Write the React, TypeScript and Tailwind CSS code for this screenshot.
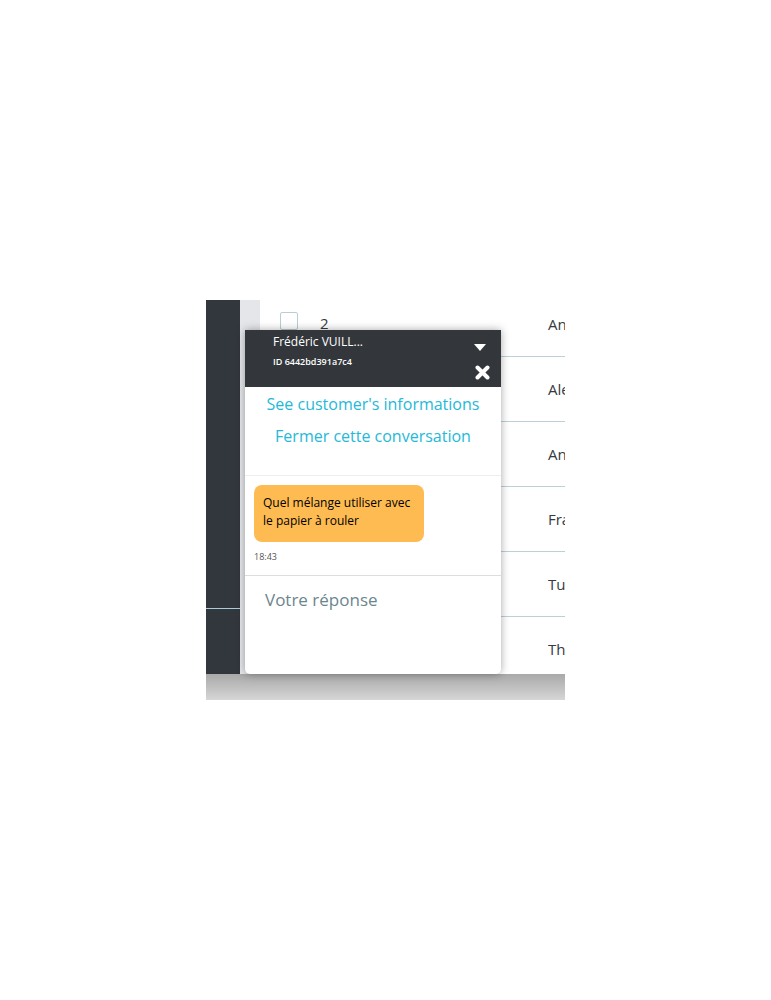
import React from "react";

const rows = [
  { t: "An" },
  { t: "Ale" },
  { t: "An" },
  { t: "Fra" },
  { t: "Tu" },
  { t: "Th" },
];

export default function App() {
  return (
    <div className="w-[771px] h-[1000px] bg-white" style={{ fontFamily: '"Open Sans", "Noto Sans", sans-serif' }}>
      <div className="pt-[300px] pl-[206px]">
        <div className="relative w-[359px] h-[400px] overflow-hidden">
          <div className="flex h-[374px] overflow-hidden">
            <div className="w-[34px] bg-[#32363d] flex flex-col">
              <div className="h-[308px]" />
              <div className="h-px bg-[#a9cdd6]" />
            </div>
            <div className="w-[20px] bg-[#e4e6e9]" />
            <div className="flex-1 bg-white -mt-[8px]">
              {rows.map((r, i) => (
                <div key={i} className="h-[65px] border-b border-[#bcd0d6] flex items-center relative">
                  {i === 0 && (
                    <>
                      <div className="absolute left-[20px] top-[20px] w-[18px] h-[18px] border border-[#bbcdd2] rounded-[2px] bg-white" />
                      <div className="absolute left-[60px] top-[20px] text-[15px] text-[#363a41]">2</div>
                    </>
                  )}
                  <div className="absolute left-[288px] text-[15px] text-[#363a41] whitespace-nowrap">{r.t}</div>
                </div>
              ))}
            </div>
          </div>
          <div className="h-[26px] bg-gradient-to-b from-[#a9a9a9] to-[#d6d6d6]" />

          {/* chat popup */}
          <div className="absolute left-[39px] top-[30px] w-[256px] h-[344px] bg-white rounded-b-[5px] shadow-[0_0_8px_rgba(0,0,0,0.35)] flex flex-col overflow-hidden">
            <div className="h-[57px] bg-[#33373b] relative shrink-0">
              <div className="absolute left-[28px] top-[3px] text-[12px] font-medium text-white leading-[18px]">Frédéric VUILL...</div>
              <div className="absolute left-[28px] top-[26px] text-[9px] font-semibold text-white leading-[12px]">ID 6442bd391a7c4</div>
              <svg className="absolute left-[229px] top-[14px]" width="12" height="8" viewBox="0 0 12 8">
                <path d="M0 0 H12 L6 7 Z" fill="#fff" />
              </svg>
              <svg className="absolute left-[230px] top-[35px]" width="15" height="15" viewBox="0 0 15 15">
                <path d="M2.5 2.5 L12.5 12.5 M12.5 2.5 L2.5 12.5" stroke="#fff" strokeWidth="4" strokeLinecap="round" />
              </svg>
            </div>
            <div className="flex flex-col items-center pt-[6px] h-[89px] border-b border-[#eeeeee] shrink-0">
              <div className="text-[16px] leading-[22px] text-[#25b9d7]">See customer's informations</div>
              <div className="text-[16px] leading-[22px] text-[#25b9d7] mt-[10px]">Fermer cette conversation</div>
            </div>
            <div className="h-[100px] border-b border-[#dddddd] shrink-0 pl-[9px] pt-[9px]">
              <div className="w-[170px] h-[57px] bg-[#fdbb52] rounded-[8px] px-[9px] pt-[9px] text-[12px] leading-[18px] text-black">
                Quel mélange utiliser avec le papier à rouler
              </div>
              <div className="text-[9px] text-[#555] mt-[8px]">18:43</div>
            </div>
            <div className="pl-[20px] pt-[11px] text-[17px] text-[#6c868e]">Votre réponse</div>
          </div>
        </div>
      </div>
    </div>
  );
}
